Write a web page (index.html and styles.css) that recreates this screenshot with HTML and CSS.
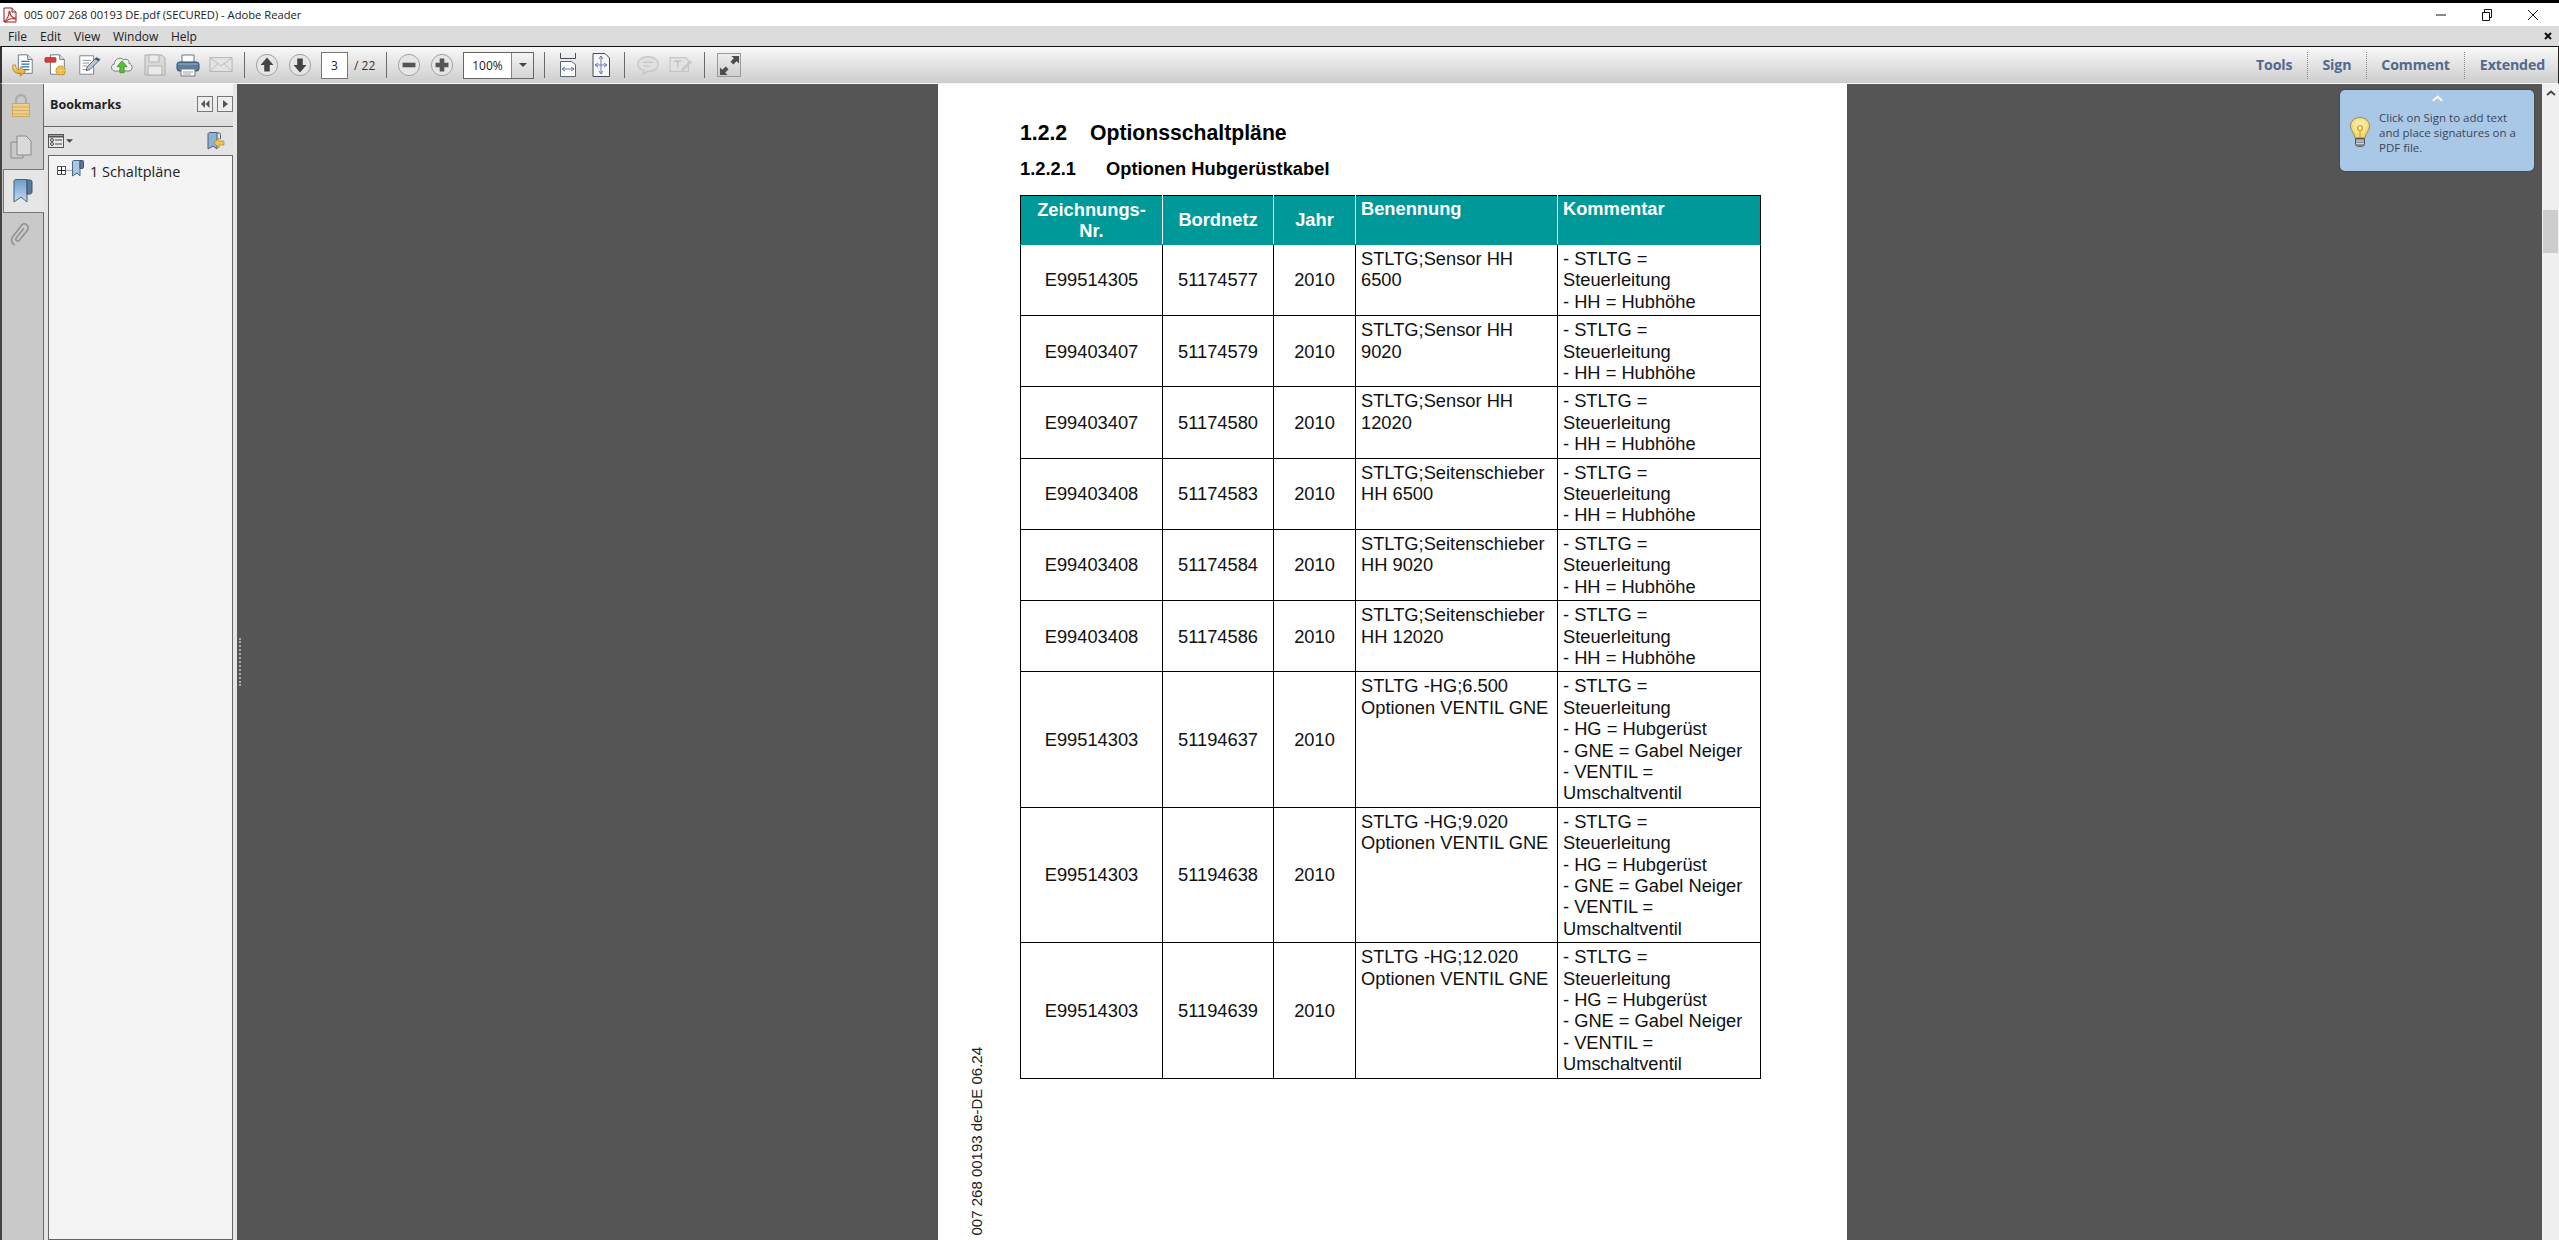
FILE: index.html
```html
<!DOCTYPE html>
<html lang="de">
<head>
<meta charset="utf-8">
<title>005 007 268 00193 DE.pdf (SECURED) - Adobe Reader</title>
<link rel="stylesheet" href="styles.css">
</head>
<body>
<div class="app">
  <div class="blackbar"></div>

  <header class="titlebar">
    <svg class="title-icon" viewBox="0 0 14 16"><path d="M1 1h8l4 4v10H1z" fill="#fff" stroke="#8c1c1c"/><path d="M9 1v4h4" fill="#f3d6d6" stroke="#8c1c1c"/><path d="M2 13.5C4.500 12 6 8 6 5.500c0-1.500 1-1.500 1 0C7 8 9 11 12 11c1 .5 0 1.200-1 1C8 11.500 5 12 3 14.500c-1 .5-1.500-.3-1-1z" fill="none" stroke="#c01f1f" stroke-width="1.100"/></svg>
    <span class="title-text">005 007 268 00193 DE.pdf (SECURED) - Adobe Reader</span>
    <div class="win-controls">
      <svg class="win-btn" viewBox="0 0 46 20"><path d="M18 10h10" stroke="#111" stroke-width="1" fill="none"/></svg>
      <svg class="win-btn" viewBox="0 0 46 20"><path d="M18.500 7.500h7v8h-7zM20.500 7.500v-3h7v8h-2" stroke="#111" stroke-width="1" fill="none"/></svg>
      <svg class="win-btn" viewBox="0 0 46 20"><path d="M18 5l10 10M28 5L18 15" stroke="#222" stroke-width="1" fill="none"/></svg>
    </div>
  </header>

  <nav class="menubar">
    <span class="menu-item m-file">File</span>
    <span class="menu-item m-edit">Edit</span>
    <span class="menu-item m-view">View</span>
    <span class="menu-item m-window">Window</span>
    <span class="menu-item">Help</span>
    <svg class="menu-close" viewBox="0 0 8 8"><path d="M1 1l6 6M7 1L1 7" stroke="#111" stroke-width="2"/></svg>
  </nav>

  <div class="toolbar">
    <div class="slot"><svg viewBox="0 0 26 26"><defs><linearGradient id="o1" x1="0" y1="0" x2="0" y2="1"><stop offset="0" stop-color="#ffe08a"/><stop offset="1" stop-color="#dc9a22"/></linearGradient></defs><path d="M8 2h10l5 5v15H8z" fill="#fff" stroke="#6d7480"/><path d="M18 2v5h5" fill="#dfe4ea" stroke="#6d7480"/><path d="M11 9h9M11 12h9M11 15h9M11 18h9" stroke="#2d6fc0" stroke-width="1.300"/><path d="M2 13c-1 6 2 10 8 9v3l6-5-6-5v3c-3 .5-5-1-5-5z" fill="url(#o1)" stroke="#a8741a" stroke-width=".8"/></svg></div>
    <div class="slot"><svg viewBox="0 0 26 26"><path d="M7 2h10l5 5v16H7z" fill="#fff" stroke="#6d7480"/><path d="M17 2v5h5" fill="#dfe4ea" stroke="#6d7480"/><rect x="1" y="5" width="12" height="5" rx="1" fill="#e03a3a" stroke="#9d1d1d" stroke-width=".7"/><circle cx="18" cy="19" r="5" fill="#f3b534" stroke="#b97e14" stroke-width=".8"/><path d="M18 13v12M12 19h12M14 15l8 8M22 15l-8 8" stroke="#f7cd65" stroke-width="1"/></svg></div>
    <div class="slot"><svg viewBox="0 0 26 26"><path d="M3 3h15v20H3z" fill="#fff" stroke="#7a8088"/><path d="M6 8h9M6 11h7M6 14h5M6 18h4" stroke="#8a9097"/><path d="M10 19l1-4L21 5l4 2-11 11z" fill="#b6c5d8" stroke="#4c5a6d"/><path d="M20 6l4 2" stroke="#2d3a4c" stroke-width="1.500"/></svg></div>
    <div class="slot"><svg viewBox="0 0 28 24"><path d="M6 19C1 19 0 12 5 11 5 5 12 2 16 6c4-2 7 1 6 4 5 1 5 9 0 9z" fill="#f2f4f6" stroke="#71777e" stroke-width="1.100"/><path d="M14 7l6 7h-3.500v7h-5v-7H8z" fill="#5cbf35" stroke="#2f8a19" stroke-width=".8"/></svg></div>
    <div class="slot"><svg class="disabled" viewBox="0 0 24 24"><path d="M2 2h17l3 3v17H2z" fill="#d8d8d8" stroke="#a4a4a4"/><path d="M6 2h10v7H6z" fill="#ececec" stroke="#a9a9a9"/><path d="M5 13h14v9H5z" fill="#ececec" stroke="#a9a9a9"/></svg></div>
    <div class="slot"><svg viewBox="0 0 24 24"><path d="M6 2h12v8H6z" fill="#fbfbfb" stroke="#6f7882"/><rect x="1" y="9" width="22" height="9" rx="2.500" fill="#5b7f9f" stroke="#34495d"/><path d="M2 11h20" stroke="#8fb0cc"/><path d="M5 16h14v7H5z" fill="#fff" stroke="#6f7882"/><path d="M7 19h10M7 21h8" stroke="#9aa3ab"/></svg></div>
    <div class="slot"><svg class="disabled" viewBox="0 0 26 20"><path d="M1 2h24v15H1z" fill="#e4e4e4" stroke="#a9a9a9"/><path d="M1 2l12 9 12-9M1 17l9-9M25 17l-9-9" fill="none" stroke="#b0b0b0"/></svg></div>
    <span class="sep sep-a"></span>
    <div class="slot"><svg viewBox="0 0 26 26"><circle cx="13" cy="13" r="11.500" fill="#e6e6e6" stroke="#9c9c9c"/><path d="M13 5l7 8h-4v7h-6v-7H6z" fill="#444"/></svg></div>
    <div class="slot"><svg viewBox="0 0 26 26"><circle cx="13" cy="13" r="11.500" fill="#e6e6e6" stroke="#9c9c9c"/><path d="M13 21l7-8h-4V6h-6v7H6z" fill="#444"/></svg></div>
    <div class="page-box">3</div>
    <span class="page-total">/ 22</span>
    <span class="sep sep-b"></span>
    <div class="slot"><svg viewBox="0 0 26 26"><circle cx="13" cy="13" r="11.500" fill="#e6e6e6" stroke="#9c9c9c"/><path d="M6 10.500h14v5H6z" fill="#555"/></svg></div>
    <div class="slot"><svg viewBox="0 0 26 26"><circle cx="13" cy="13" r="11.500" fill="#e6e6e6" stroke="#9c9c9c"/><path d="M10.500 6h5v4.500H20v5h-4.500V20h-5v-4.500H6v-5h4.500z" fill="#555"/></svg></div>
    <div class="zoom-box"><span class="zoom-value">100%</span><span class="zoom-drop"><svg viewBox="0 0 8 4"><path d="M0 0h8L4 4z" fill="#444"/></svg></span></div>
    <span class="sep sep-c"></span>
    <div class="slot"><svg class="fit" viewBox="0 0 18 24"><path d="M1.500 0v5.500h15V0" fill="none" stroke="#454c58"/><path d="M1.500 8.500h11l4 3v12h-15z" fill="#fff" stroke="#5b6474"/><path d="M3 16h12M3 16l3-2M3 16l3 2M15 16l-3-2M15 16l-3 2" stroke="#5f78a5" fill="none"/></svg></div>
    <div class="slot"><svg class="fit" viewBox="0 0 18 24"><path d="M1 .500h12l4.500 4.500v18.500H1z" fill="#f5f7fb" stroke="#454c58"/><path d="M9 3v18M3 12h12M9 3L7 6M9 3l2 3M9 21l-2-3M9 21l2-3M3 12l3-2M3 12l3 2M15 12l-3-2M15 12l-3 2" stroke="#6a7fa8" fill="none"/></svg></div>
    <span class="sep sep-d"></span>
    <div class="slot"><svg class="disabled" viewBox="0 0 26 22"><path d="M13 2c6.500 0 11 3.500 11 8s-4.500 8-11 8l-1 0-4 3 .5-4C4 15.500 2 13 2 10c0-4.500 4.500-8 11-8z" fill="#e0e0e0" stroke="#c2c2c2" stroke-width="1.500"/><path d="M8 8h10M8 12h7" stroke="#c2c2c2" stroke-width="1.500"/></svg></div>
    <div class="slot"><svg class="disabled" viewBox="0 0 26 22"><path d="M1 3h17l3 3v12H1z" fill="#e2e2e2" stroke="#c2c2c2" stroke-width="1.300"/><path d="M6 7h7M9.500 7v7" stroke="#bcbcbc" stroke-width="1.500"/><path d="M14 17l10-10" stroke="#c5c5c5" stroke-width="3"/></svg></div>
    <span class="sep sep-e"></span>
    <div class="full-btn"><svg viewBox="0 0 22 22"><path d="M13 1h8v8l-2.500-2.500L15 10l-3-3 3.500-3.500zM9 21H1v-8l2.500 2.500L7 12l3 3-3.500 3.500z" fill="#4d4d4d"/></svg></div>

    <div class="tasks">
      <span class="task">Tools</span><span class="task-sep"></span>
      <span class="task">Sign</span><span class="task-sep"></span>
      <span class="task">Comment</span><span class="task-sep"></span>
      <span class="task">Extended</span>
    </div>
  </div>

  <main class="main">
    <aside class="tabs">
      <div class="tab"><svg viewBox="0 0 22 24"><path d="M6 11V7c0-6.500 10-6.500 10 0v4" fill="none" stroke="#a9a9a9" stroke-width="2"/><rect x="2.500" y="10.500" width="17" height="13" fill="#efcf85" stroke="#c9a962"/><path d="M3 14h16M3 17.500h16M3 21h16" stroke="#cdac64"/></svg></div>
      <div class="tab"><svg viewBox="0 0 22 24"><path d="M1 7h12v16H1z" fill="#c9c9c9" stroke="#8a8a8a"/><path d="M7 1h9l5 5v14H7z" fill="#dadada" stroke="#8a8a8a"/></svg></div>
      <div class="tab tab-active"><svg viewBox="0 0 20 24"><defs><linearGradient id="bm1" x1="0" y1="0" x2="0" y2="1"><stop offset="0" stop-color="#6b9ac5"/><stop offset="1" stop-color="#c7ddf0"/></linearGradient></defs><path d="M1 2c0-1 1-1.500 2-1.500h11V23l-6-5-7 5z" fill="url(#bm1)" stroke="#44617d"/><path d="M14 1h3c1.500 0 2 1 2 2v10c0 1-1 2-2 2h-3z" fill="#57799a" stroke="#3c556e"/></svg></div>
      <div class="tab"><svg viewBox="0 0 24 26"><path d="M5 25c-4-2-4-6-2-9L13 3c3-3 9 1 6 6L10 20c-2 2-5 0-3-3l8-10" fill="none" stroke="#8f8f8f" stroke-width="1.600"/></svg></div>
    </aside>

    <section class="panel">
      <div class="panel-head">
        <span class="panel-title">Bookmarks</span>
        <button class="pbtn"><svg viewBox="0 0 10 8"><path d="M5 0v8L1 4zM9.500 0v8l-4-4z" fill="#555"/></svg></button>
        <button class="pbtn"><svg viewBox="0 0 10 8"><path d="M3 0v8l5-4z" fill="#555"/></svg></button>
      </div>
      <div class="panel-tools">
        <svg class="opt-icon" viewBox="0 0 16 14"><rect x=".5" y=".5" width="15" height="13" fill="#e9e9e9" stroke="#555"/><path d="M.5 2.500h15" stroke="#555" stroke-width="2"/><circle cx="4" cy="6" r="1.500" fill="none" stroke="#444"/><circle cx="4" cy="10" r="1.500" fill="none" stroke="#444"/><path d="M7 6h7M7 10h7" stroke="#444"/></svg>
        <svg class="opt-drop" viewBox="0 0 8 4"><path d="M0 0h8L4 4z" fill="#444"/></svg>
        <svg class="goto-icon" viewBox="0 0 18 18"><path d="M1 2c0-1 1-1.500 2-1.500h7V17l-4-3-5 3z" fill="#8db2d3" stroke="#44617d"/><path d="M10 1h2c1 0 1.500 .5 1.500 1.500V7" fill="none" stroke="#44617d"/><path d="M7 11l5-5v3h5v4h-5v3z" fill="#f4c34c" stroke="#b2841f" stroke-width=".7"/></svg>
      </div>
      <div class="tree">
        <div class="tree-row">
          <span class="expander"></span><span class="tree-line"></span>
          <svg class="tree-icon" viewBox="0 0 12 17"><path d="M.5 1.500C.5 .8 1 .5 2 .5h6v15.500L5 13l-4.500 3z" fill="#a9c6e2" stroke="#4a6784"/><path d="M8 .5h2.500c.7 0 1 .5 1 1V7c0 1-.5 1.500-1 1.500H8z" fill="#5a7a9a" stroke="#3e566f"/></svg>
          <span class="tree-label">1 Schaltpläne</span>
        </div>
      </div>
    </section>

    <div class="splitter"><span class="grip"></span></div>

    <section class="viewer">
      <article class="page">
        <div class="page-margin"><span class="doc-ref">007 268 00193 de-DE 06.24</span></div>
        <div class="page-body">
          <h2 class="h-one"><span class="num-one">1.2.2</span>Optionsschaltpläne</h2>
          <h3 class="h-two"><span class="num-two">1.2.2.1</span>Optionen Hubgerüstkabel</h3>
          <table class="doc-table">
            <colgroup><col class="c1"><col class="c2"><col class="c3"><col class="c4"><col class="c5"></colgroup>
            <thead>
              <tr><th class="mid">Zeichnungs-<br>Nr.</th><th class="mid">Bordnetz</th><th class="mid">Jahr</th><th>Benennung</th><th>Kommentar</th></tr>
            </thead>
            <tbody>
              <tr><td class="mid">E99514305</td><td class="mid">51174577</td><td class="mid">2010</td><td>STLTG;Sensor HH<br>6500</td><td>- STLTG =<br>Steuerleitung<br>- HH = Hubhöhe</td></tr>
              <tr><td class="mid">E99403407</td><td class="mid">51174579</td><td class="mid">2010</td><td>STLTG;Sensor HH<br>9020</td><td>- STLTG =<br>Steuerleitung<br>- HH = Hubhöhe</td></tr>
              <tr><td class="mid">E99403407</td><td class="mid">51174580</td><td class="mid">2010</td><td>STLTG;Sensor HH<br>12020</td><td>- STLTG =<br>Steuerleitung<br>- HH = Hubhöhe</td></tr>
              <tr><td class="mid">E99403408</td><td class="mid">51174583</td><td class="mid">2010</td><td>STLTG;Seitenschieber<br>HH 6500</td><td>- STLTG =<br>Steuerleitung<br>- HH = Hubhöhe</td></tr>
              <tr><td class="mid">E99403408</td><td class="mid">51174584</td><td class="mid">2010</td><td>STLTG;Seitenschieber<br>HH 9020</td><td>- STLTG =<br>Steuerleitung<br>- HH = Hubhöhe</td></tr>
              <tr><td class="mid">E99403408</td><td class="mid">51174586</td><td class="mid">2010</td><td>STLTG;Seitenschieber<br>HH 12020</td><td>- STLTG =<br>Steuerleitung<br>- HH = Hubhöhe</td></tr>
              <tr><td class="mid">E99514303</td><td class="mid">51194637</td><td class="mid">2010</td><td>STLTG -HG;6.500<br>Optionen VENTIL GNE</td><td>- STLTG =<br>Steuerleitung<br>- HG = Hubgerüst<br>- GNE = Gabel Neiger<br>- VENTIL =<br>Umschaltventil</td></tr>
              <tr><td class="mid">E99514303</td><td class="mid">51194638</td><td class="mid">2010</td><td>STLTG -HG;9.020<br>Optionen VENTIL GNE</td><td>- STLTG =<br>Steuerleitung<br>- HG = Hubgerüst<br>- GNE = Gabel Neiger<br>- VENTIL =<br>Umschaltventil</td></tr>
              <tr><td class="mid">E99514303</td><td class="mid">51194639</td><td class="mid">2010</td><td>STLTG -HG;12.020<br>Optionen VENTIL GNE</td><td>- STLTG =<br>Steuerleitung<br>- HG = Hubgerüst<br>- GNE = Gabel Neiger<br>- VENTIL =<br>Umschaltventil</td></tr>
            </tbody>
          </table>
        </div>
      </article>

      <div class="hint">
        <svg class="hint-chevron" viewBox="0 0 12 7"><path d="M1 6l5-4.500L11 6" fill="none" stroke="#fff" stroke-width="2.200"/></svg>
        <div class="hint-body">
          <svg class="bulb" viewBox="0 0 20 30"><defs><radialGradient id="bg1" cx=".5" cy=".4" r=".6"><stop offset="0" stop-color="#fff7c4"/><stop offset="1" stop-color="#f2cf55"/></radialGradient></defs><path d="M10 .5C4.500 .5 .5 4 .5 9c0 5 4 7 4.500 12h10c.5-5 4.500-7 4.500-12 0-5-4-8.500-9.500-8.500z" fill="url(#bg1)" stroke="#8d8d6b"/><circle cx="10" cy="11" r="2.500" fill="none" stroke="#d79a20" stroke-width="1.200"/><path d="M10 13.500V21" stroke="#d79a20"/><path d="M5.500 21.500h9v6c0 1-2 2-4.500 2s-4.500-1-4.500-2z" fill="#8d939a" stroke="#555"/><path d="M6 24h8M6 26.500h8" stroke="#d5d5d5"/></svg>
          <p class="hint-text">Click on Sign to add text<br>and place signatures on a<br>PDF file.</p>
        </div>
      </div>
    </section>

    <div class="vscroll">
      <svg class="scroll-up" viewBox="0 0 10 6"><path d="M1 5l4-3.500L9 5" fill="none" stroke="#444" stroke-width="1.800"/></svg>
      <span class="scroll-thumb"></span>
    </div>
  </main>
</div>
</body>
</html>
```

FILE: styles.css
```css
* { box-sizing: border-box; }
html, body { margin: 0; padding: 0; height: 100%; overflow: hidden; }
body { font-family: "Open Sans", "Noto Sans", sans-serif; background: #555; }

.app { width: 2559px; height: 1240px; display: flex; flex-direction: column; overflow: hidden; }
.blackbar { height: 3px; background: #000; flex: none; }

/* title bar */
.titlebar { height: 23px; background: #fff; flex: none; display: flex; align-items: center; padding-left: 3px; }
.title-icon { width: 14px; height: 16px; margin-right: 7px; }
.title-text { font-size: 11.200px; color: #222; white-space: nowrap; }
.win-controls { margin-left: auto; display: flex; margin-right: 3px; }
.win-btn { width: 46px; height: 20px; display: block; }

/* menu */
.menubar { height: 20px; background: #dcdcdc; flex: none; display: flex; align-items: center; padding-left: 8px; position: relative; }
.menu-item { font-size: 12px; color: #222; }
.m-file { width: 32px; }
.m-edit { width: 34px; }
.m-view { width: 39px; }
.m-window { width: 58px; }
.menu-close { width: 8px; height: 8px; margin-left: auto; margin-right: 7px; }

/* toolbar */
.toolbar { height: 38px; flex: none; display: flex; align-items: center; padding-left: 4.500px; border-top: 1px solid #111; border-left: 2px solid #333; border-right: 1px solid #222; border-bottom: 1px solid #f7f7f7; background: linear-gradient(#f8f8f8, #cdcdcd); }
.slot { width: 33px; height: 30px; flex: none; display: flex; align-items: center; justify-content: center; }
.slot svg { width: 24px; height: 24px; display: block; }
.slot svg.fit { width: 18px; height: 24px; }
.slot svg.disabled { opacity: .85; }
.sep { width: 1px; height: 26px; background: #6a6a6a; flex: none; }
.sep-a { margin: 0 5px 0 6.500px; }
.sep-b { margin: 0 5.500px 0 7px; }
.sep-c { margin: 0 6.500px 0 10px; }
.sep-d { margin: 0 6.500px 0 6.500px; }
.sep-e { margin: 0 12px 0 6.500px; }
.page-box { width: 27px; height: 27px; margin-left: 5px; background: #fff; border: 1px solid #777; font-size: 12px; color: #222; display: flex; align-items: center; justify-content: center; flex: none; }
.page-total { font-size: 12px; color: #333; margin-left: 6px; width: 25px; white-space: nowrap; flex: none; }
.zoom-box { width: 71px; height: 27px; margin-left: 4.500px; display: flex; border: 1px solid #666; background: #fff; flex: none; }
.zoom-value { width: 48px; font-size: 12px; color: #222; display: flex; align-items: center; justify-content: center; border-right: 1px solid #888; }
.zoom-drop { flex: 1; background: linear-gradient(#f4f4f4, #d4d4d4); display: flex; align-items: center; justify-content: center; }
.zoom-drop svg { width: 8px; height: 4px; }
.full-btn { width: 24px; height: 24px; border: 1px solid #9a9a9a; background: linear-gradient(#ededed, #cfcfcf); flex: none; display: flex; align-items: center; justify-content: center; }
.full-btn svg { width: 21px; height: 21px; }
.tasks { margin-left: auto; display: flex; align-items: center; margin-right: 13px; }
.task { font-size: 14.200px; font-weight: 700; letter-spacing: -.15px; color: #52698f; line-height: 20px; white-space: nowrap; }
.task-sep { width: 0; height: 27px; border-left: 1px dotted #8a8a8a; margin: 0 14.500px; }

/* main */
.main { flex: 1; display: flex; min-height: 0; }
.tabs { width: 44px; flex: none; background: #c9c9c9; border-left: 2px solid #444; border-right: 1px solid #6a6a6a; display: flex; flex-direction: column; }
.tab { height: 42px; display: flex; align-items: center; justify-content: center; padding-right: 3px; }
.tab svg { width: 22px; height: 24px; display: block; }
.tab-active { height: 44px; background: #e6e6e6; border: 1px solid #777; border-right: none; margin: 1px -1px 0 1px; position: relative; padding-right: 2px; }
.tab-active svg { width: 20px; height: 24px; }

.panel { width: 189px; flex: none; background: #e3e3e3; display: flex; flex-direction: column; }
.panel-head { height: 43px; flex: none; display: flex; align-items: center; padding: 0 0 2px 6px; background: linear-gradient(#f8f8f8, #dcdcdc); border-bottom: 1px solid #666; }
.panel-title { font-size: 12.500px; font-weight: 700; color: #222; width: 147px; flex: none; white-space: nowrap; }
.pbtn { width: 16px; height: 16px; flex: none; padding: 0; border: 1px solid #777; background: #eee; display: flex; align-items: center; justify-content: center; }
.pbtn + .pbtn { margin-left: 4px; }
.pbtn svg { width: 10px; height: 8px; }
.panel-tools { height: 28px; flex: none; display: flex; align-items: center; padding-left: 4px; padding-right: 8px; }
.opt-icon { width: 16px; height: 14px; }
.opt-drop { width: 7px; height: 4px; margin-left: 2px; }
.goto-icon { width: 18px; height: 18px; margin-left: auto; }
.tree { flex: 1; margin-left: 4px; margin-right: 0; background: #f4f4f4; border: 1px solid #666; padding: 4px 0 0 8px; }
.tree-row { display: flex; align-items: flex-start; }
.expander { width: 9px; height: 9px; margin-top: 6px; border: 1px solid #555; background: linear-gradient(to right, transparent 3px, #222 3px, #222 4px, transparent 4px), linear-gradient(to bottom, transparent 3px, #222 3px, #222 4px, transparent 4px), #fff; }
.tree-line { width: 6px; height: 1px; background: #aaa; margin-top: 10px; }
.tree-icon { width: 12px; height: 17px; }
.tree-label { font-size: 14.500px; color: #222; margin-left: 6px; line-height: 20px; margin-top: 2px; white-space: nowrap; }

.splitter { width: 4px; flex: none; background: #e6e6e6; position: relative; z-index: 1; }
.grip { position: absolute; left: 6px; top: 554px; width: 2px; height: 48px; border-left: 2px dotted #aaa; }

/* viewer */
.viewer { flex: 1; background: #555; overflow: hidden; position: relative; }
.page { margin-left: 701px; width: 909px; height: 100%; background: #fff; display: flex; color: #000; font-family: "Liberation Sans", Arial, sans-serif; }
.page-margin { width: 82px; flex: none; padding: 963px 0 0 30px; }
.doc-ref { display: block; writing-mode: vertical-rl; transform: rotate(180deg); font-size: 15px; line-height: 17px; color: #222; white-space: nowrap; }
.page-body { flex: 1; min-width: 0; }
.h-one { margin: 37px 0 0; font-size: 21.200px; line-height: 24px; font-weight: 700; white-space: nowrap; }
.num-one { display: inline-block; width: 70px; }
.h-two { margin: 13px 0 0; font-size: 18.300px; line-height: 22px; font-weight: 700; white-space: nowrap; }
.num-two { display: inline-block; width: 86px; }
.doc-table { margin-top: 15px; border-collapse: collapse; table-layout: fixed; width: 740px; font-size: 18.300px; line-height: 21.400px; }
.c1 { width: 142px; } .c2 { width: 111px; } .c3 { width: 82px; } .c4 { width: 202px; } .c5 { width: 203px; }
.doc-table th, .doc-table td { border: 1px solid #000; padding: 3px 5px; text-align: left; vertical-align: top; white-space: nowrap; }
.doc-table th { background: #009999; color: #fff; font-weight: 700; height: 49px; padding: 2px 5px; border-top-color: #000; border-bottom-color: #009999; border-left-color: #fff; border-right-color: #fff; }
.doc-table th:first-child { border-left-color: #000; }
.doc-table th:last-child { border-right-color: #000; }
.doc-table th.mid, .doc-table td.mid { text-align: center; vertical-align: middle; }
.doc-table td { color: #111; }

/* hint */
.hint { position: absolute; left: 2103px; top: 6px; width: 194px; height: 81px; background: #a9c8e6; border-radius: 5px; padding-top: 5px; box-shadow: 0 0 2px rgba(0,0,0,.4); }
.hint-chevron { display: block; width: 11px; height: 7px; margin: 0 auto; }
.hint-body { display: flex; align-items: flex-start; padding: 8px 0 0 10px; }
.bulb { width: 20px; height: 30px; margin-top: 7px; flex: none; }
.hint-text { margin: 0 0 0 9px; font-size: 11.500px; line-height: 15px; color: #39465a; white-space: nowrap; }

/* scrollbar */
.vscroll { width: 17px; flex: none; background: #f0f0f0; display: flex; flex-direction: column; align-items: center; padding-top: 6px; }
.scroll-up { width: 10px; height: 6px; flex: none; }
.scroll-thumb { width: 15px; height: 43px; background: #cdcdcd; margin-top: 114px; flex: none; }
```
